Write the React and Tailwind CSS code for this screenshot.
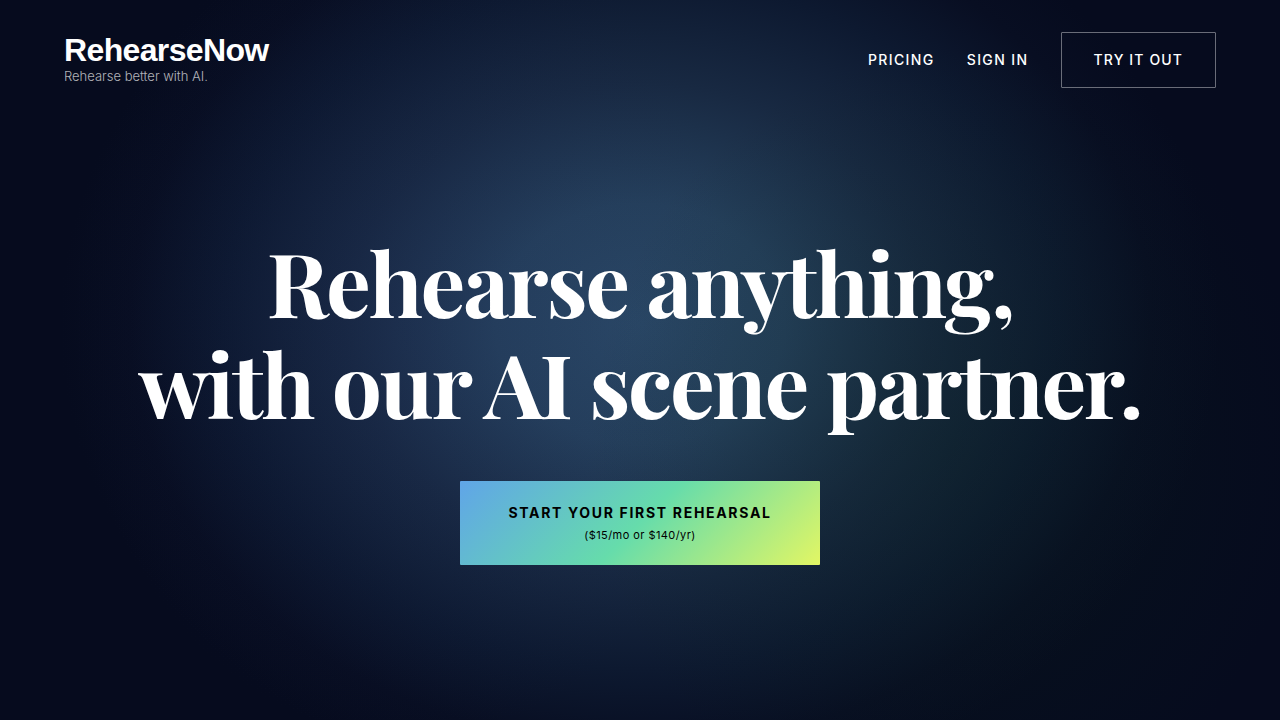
import React from "react";

const navLinks = [
  { label: "Pricing", href: "#pricing" },
  { label: "Sign in", href: "#sign-in" },
];

const Header = () => (
  <header className="flex items-center justify-between px-16 pt-8">
    <a href="#home" className="flex flex-col pb-1">
      <span className="font-['Liberation_Sans',Arial,sans-serif] text-[32px] leading-9 font-bold tracking-[-0.02em]">
        RehearseNow
      </span>
      <span className="text-[13px] leading-4 font-light text-white/70">
        Rehearse better with AI.
      </span>
    </a>

    <nav className="flex items-center gap-8 text-sm font-medium uppercase tracking-[0.1em]">
      {navLinks.map((link) => (
        <a key={link.label} href={link.href} className="hover:text-white/80">
          {link.label}
        </a>
      ))}
      <a
        href="#try"
        className="flex h-14 items-center rounded-[1px] border border-white/40 px-8 tracking-[0.08em] hover:bg-white/10"
      >
        Try it out
      </a>
    </nav>
  </header>
);

const Hero = () => (
  <main className="flex flex-1 flex-col items-center justify-center px-8 pb-3 text-center">
    <h1 className="font-['Playfair_Display','Liberation_Serif',serif] text-[89px] leading-[101px] font-bold tracking-tight">
      Rehearse anything,
      <br />
      with our AI scene partner.
    </h1>
    <button
      type="button"
      className="mt-12 flex flex-col items-center rounded-[1px] bg-[linear-gradient(135deg,#60a5e8_0%,#66dcab_50%,#e2f664_100%)] px-12 py-5 text-black"
    >
      <span className="text-sm leading-6 font-bold uppercase tracking-[0.12em]">
        Start your first rehearsal
      </span>
      <span className="text-[11px] leading-5 tracking-[0.04em]">
        ($15/mo or $140/yr)
      </span>
    </button>
  </main>
);

export default function App() {
  return (
    <div className="flex min-h-screen flex-col bg-[#060b1e] bg-[radial-gradient(ellipse_340px_420px_at_32%_45%,#1b1f6020_0%,#1b1f6000_100%),radial-gradient(ellipse_360px_400px_at_74%_62%,#0a261c4d_0%,#0a261c00_100%),radial-gradient(ellipse_580px_480px_at_50%_45%,#2a4866_0%,#25405c_25%,#182942_50%,#0d1930_72%,#080e22_88%,#060b1e_100%)] font-[Inter,sans-serif] text-white">
      <Header />
      <Hero />
    </div>
  );
}
